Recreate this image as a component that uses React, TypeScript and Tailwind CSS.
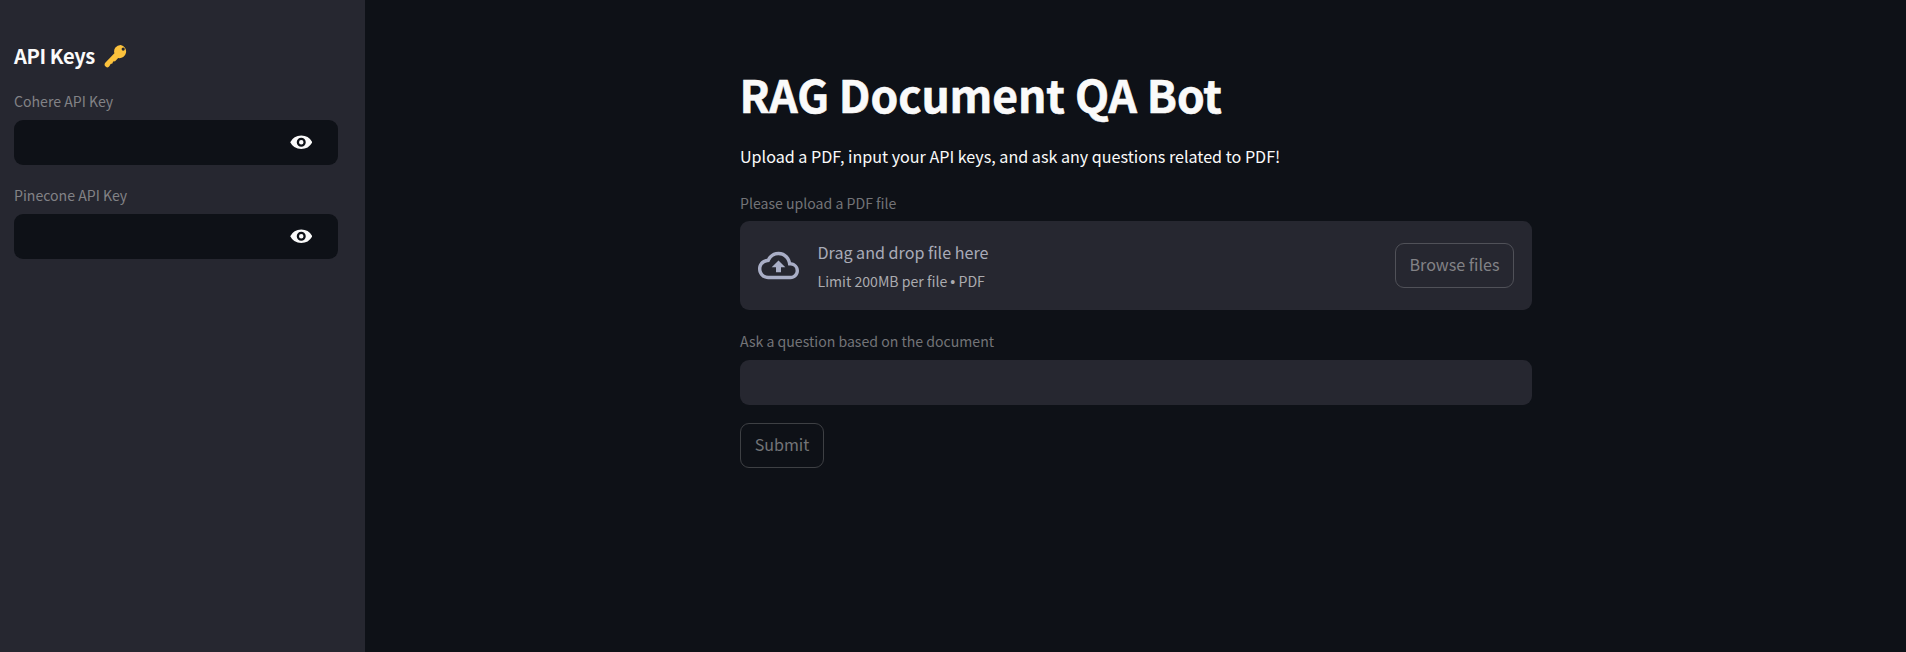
import React from "react";

function EyeIcon() {
  return (
    <svg viewBox="0 0 20 20" className="size-[22.5px]" fill="#fafafa" aria-hidden="true">
      <path
        fillRule="evenodd"
        d="M.2 10a11 11 0 0 1 19.6 0A11 11 0 0 1 .2 10zm9.8 4a4 4 0 1 0 0-8 4 4 0 0 0 0 8zm0-2a2 2 0 1 1 0-4 2 2 0 0 1 0 4z"
      />
    </svg>
  );
}

function CloudUploadIcon() {
  return (
    <svg viewBox="0 0 24 24" className="size-[41px] shrink-0" fill="#a9aec6" aria-hidden="true">
      <path d="M19.35 10.04C18.67 6.59 15.64 4 12 4 9.11 4 6.6 5.64 5.35 8.04 2.34 8.36 0 10.91 0 14c0 3.31 2.69 6 6 6h13c2.76 0 5-2.24 5-5 0-2.64-2.05-4.78-4.65-4.96zM19 18H6c-2.21 0-4-1.79-4-4 0-2.05 1.53-3.76 3.56-3.97l1.07-.11.5-.95A5.469 5.469 0 0 1 12 6c2.62 0 4.88 1.86 5.39 4.43l.3 1.5 1.53.11A2.98 2.98 0 0 1 22 15c0 1.65-1.35 3-3 3zM8 13h2.55v3h2.9v-3H16l-4-4z" />
    </svg>
  );
}

function KeyIcon() {
  return (
    <svg viewBox="0 0 24 24" className="size-6" aria-hidden="true">
      <path
        fill="#fcc23c"
        fillRule="evenodd"
        d="M16.7 .9a6.5 6.5 0 0 0-6.3 8.4L1.5 18.4a2.6 2.6 0 0 0 .1 4.1 2.6 2.6 0 0 0 3.9-.4l1.1-2.2 1.8-.3.7-2 2-.4 3.1-3.2A6.6 6.6 0 1 0 16.7 .9zm2.5 2.6a1.6 1.6 0 1 1 0 3.2 1.6 1.6 0 0 1 0-3.2z"
      />
    </svg>
  );
}

function KeyField({ label }: { label: string }) {
  return (
    <div>
      <div className="h-[25px] text-[14.1px] leading-[25px] text-[#828286]">{label}</div>
      <div className="mt-[6px] flex h-[45px] items-center justify-end rounded-[9px] bg-[#0e1117] pr-[26px]">
        <EyeIcon />
      </div>
    </div>
  );
}

export default function App() {
  return (
    <div className="flex h-[652px] w-full overflow-hidden bg-[#0e1117] font-['Noto_Sans_CJK_SC','Noto_Sans',sans-serif] whitespace-nowrap text-[#fafafa]">
      <aside className="w-[365px] shrink-0 bg-[#262730] pt-[42px] pr-[27px] pl-[14px]">
        <h2 className="flex h-[27px] items-center gap-[9px] text-[20.1px] leading-[27px] font-semibold tracking-[-0.4px]">
          <span>API Keys</span>
          <KeyIcon />
        </h2>
        <div className="mt-[20px] flex flex-col gap-[18px]">
          <KeyField label="Cohere API Key" />
          <KeyField label="Pinecone API Key" />
        </div>
      </aside>
      <main className="flex flex-1 justify-center">
        <div className="w-[792px] pt-[64px]">
          <h1 className="h-[60px] text-[44.4px] leading-[60px] font-bold tracking-[-0.1px] [-webkit-text-stroke:0.6px_#fafafa]">
            RAG Document QA Bot
          </h1>
          <p className="mt-[18px] h-[29px] pl-[0.5px] text-[16.12px] leading-[29px]">
            Upload a PDF, input your API keys, and ask any questions related to PDF!
          </p>
          <div className="mt-[20px] h-[25px] pl-[0.5px] text-[14.1px] leading-[25px] text-[#737477]">
            Please upload a PDF file
          </div>
          <div className="mt-[5px] flex h-[89px] items-center rounded-[9px] bg-[#262730] px-[18px]">
            <CloudUploadIcon />
            <div className="ml-[19px] flex-1">
              <div className="h-[29px] text-[16.1px] leading-[29px] text-[#a9abb8]">Drag and drop file here</div>
              <div className="h-[26px] text-[14.1px] leading-[28px] text-[#ababaf]">
                Limit 200MB per file <span className="font-['Liberation_Sans',sans-serif]">•</span> PDF
              </div>
            </div>
            <button className="h-[45px] w-[119px] rounded-[9px] border border-[#505158] pb-[3px] pl-px text-[16.1px] leading-[24px] text-[#828286]">
              Browse files
            </button>
          </div>
          <div className="mt-[19px] h-[25px] pl-[0.5px] text-[14.1px] leading-[25px] text-[#737477]">
            Ask a question based on the document
          </div>
          <div className="mt-[6px] h-[45px] rounded-[9px] bg-[#262730]" />
          <button className="mt-[18px] h-[45px] w-[84px] rounded-[9px] border border-[#3e4044] pb-[3px] pl-px text-[16.1px] leading-[24px] text-[#737477]">
            Submit
          </button>
        </div>
      </main>
    </div>
  );
}
